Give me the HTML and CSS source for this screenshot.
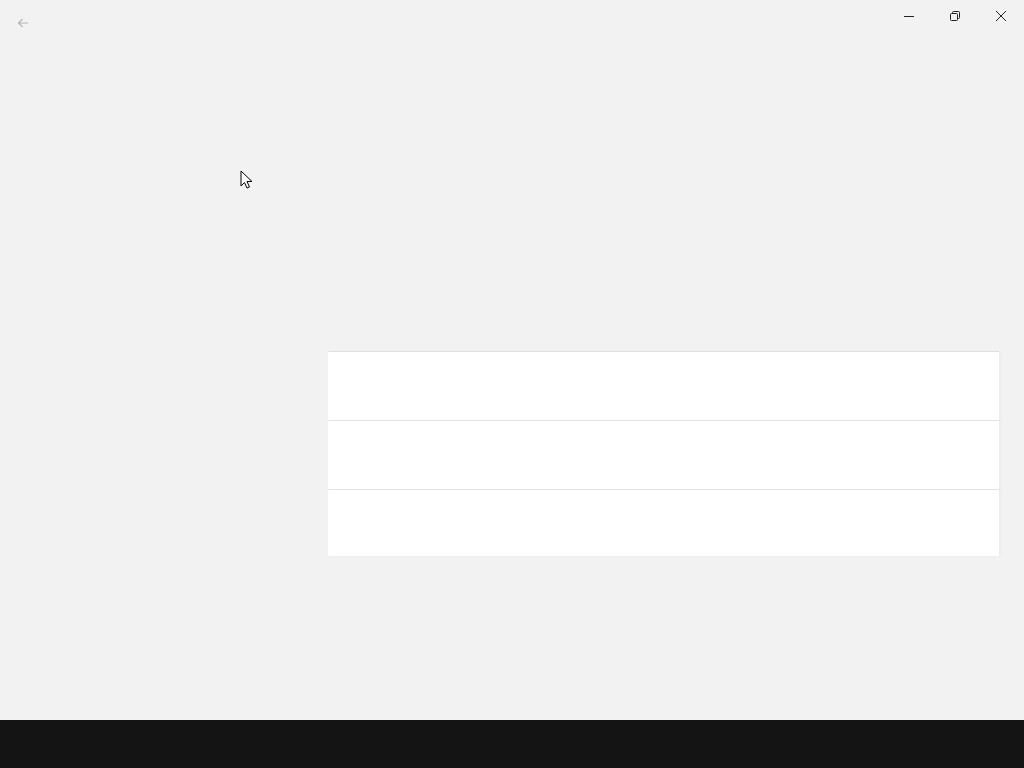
FILE: index.html
```html
<!DOCTYPE html>
<html>
<head>
  <title>Settings</title>
  <link rel="stylesheet" href="styles.css">
</head>
<body>
  <div class="window">
    <div class="titlebar">
      <button class="back" aria-label="Back">
        <svg width="12" height="12" viewBox="0 0 12 12"><path d="M11 6H1.5M5.5 2L1.5 6l4 4" fill="none" stroke="#b4b4b4" stroke-width="1.1"/></svg>
      </button>
      <div class="controls">
        <button class="ctl" aria-label="Minimize">
          <svg width="10" height="10" viewBox="0 0 10 10"><path d="M0 5.5h10" stroke="#222" stroke-width="1"/></svg>
        </button>
        <button class="ctl" aria-label="Restore">
          <svg width="10" height="10" viewBox="0 0 10 10"><rect x="0.5" y="2.5" width="7" height="7" rx="1" fill="none" stroke="#222"/><path d="M2.5 2.5V1.5a1 1 0 0 1 1-1h5a1 1 0 0 1 1 1v5a1 1 0 0 1-1 1h-1" fill="none" stroke="#222"/></svg>
        </button>
        <button class="ctl" aria-label="Close">
          <svg width="12" height="12" viewBox="0 0 12 12"><path d="M1 1l10 10M11 1L1 11" stroke="#222" stroke-width="1"/></svg>
        </button>
      </div>
    </div>

    <div class="content">
      <div class="list">
        <div class="item"></div>
        <div class="item"></div>
        <div class="item last"></div>
      </div>
    </div>

    <svg class="cursor" width="14" height="20" viewBox="0 0 14 20"><path d="M1 1v15l3.5-3.5 2.5 5.5 2.5-1-2.5-5.5H12z" fill="#fff" stroke="#000" stroke-width="1"/></svg>
  </div>

  <div class="taskbar"></div>
</body>
</html>
```

FILE: styles.css
```css
body {
  margin: 0;
  padding: 0;
  font-family: "Segoe UI", "Open Sans", sans-serif;
  background-color: #f2f2f2;
}

.window {
  height: 720px;
  position: relative;
  display: flex;
  flex-direction: column;
}

.titlebar {
  height: 32px;
  display: flex;
  justify-content: space-between;
  align-items: flex-start;
}

button {
  border: none;
  background: none;
  padding: 0;
  margin: 0;
  display: flex;
  align-items: center;
  justify-content: center;
}

.back {
  width: 46px;
  height: 46px;
}

.controls {
  display: flex;
}

.ctl {
  width: 46px;
  height: 32px;
}

.content {
  padding-top: 319px;
  padding-left: 328px;
  padding-right: 25px;
}

.list {
  border-top: 1px solid #e3e3e3;
}

.item {
  height: 68px;
  background-color: #fff;
  border-bottom: 1px solid #e6e6e6;
  box-shadow: 2px 0 3px rgba(0, 0, 0, 0.03);
}

.item.last {
  height: 66px;
  border-bottom: none;
}

.cursor {
  position: absolute;
  left: 240px;
  top: 170px;
}

.taskbar {
  height: 48px;
  background-color: #141414;
}
```
